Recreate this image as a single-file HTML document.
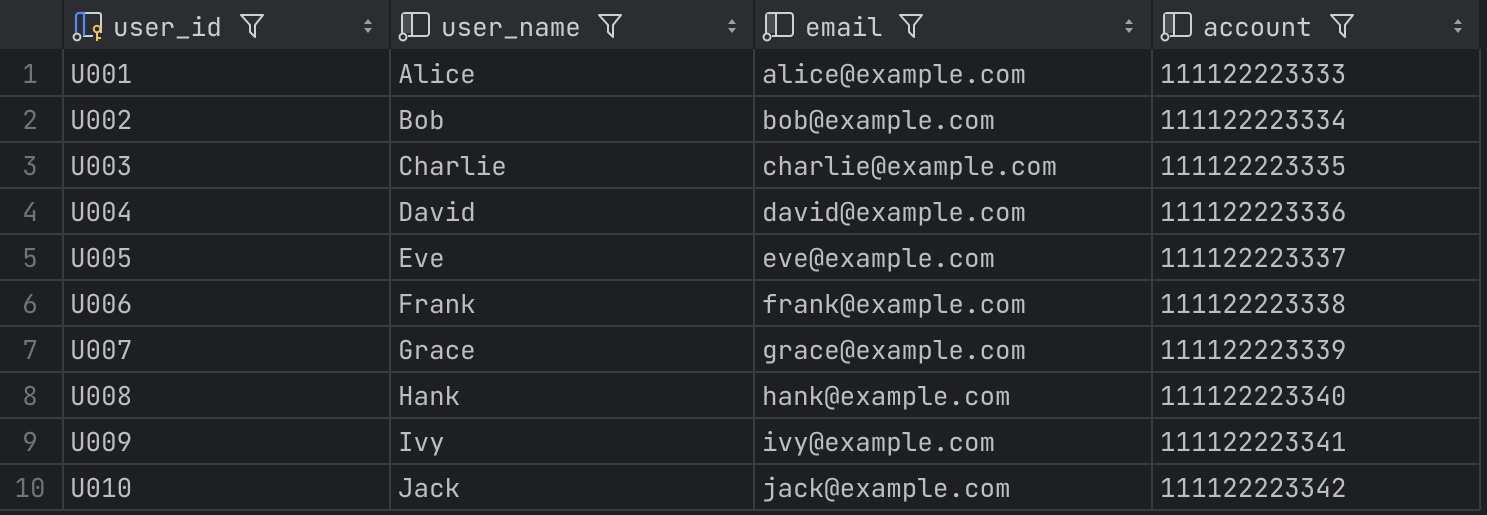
<!DOCTYPE html>
<html><head><style>
body{margin:0;width:1487px;height:515px;background:#1e1f22;overflow:hidden;position:relative;font-family:"JetBrains Mono","Liberation Mono","DejaVu Sans Mono",monospace;font-size:25.9px;color:#bcbec4}
.hdr{position:absolute;top:0;left:0;width:1480px;height:49px;background:#2b2d30}
.vl{position:absolute;top:0;width:2px;height:515px;background:#393b40}
.hl{position:absolute;left:0;width:1480px;height:2px;background:#393b40}
.t{position:absolute;line-height:30px;white-space:pre}
.n{color:#6f737a;text-align:center;width:60px;left:0 !important}
.h{color:#c9ccd2}
svg{position:absolute}
</style></head><body>
<div class="hdr"></div>
<div class="vl" style="left:62px;background:#1e1f22;height:49px"></div>
<div class="vl" style="left:389px;background:#1e1f22;height:49px"></div>
<div class="vl" style="left:753px;background:#1e1f22;height:49px"></div>
<div class="vl" style="left:1151px;background:#1e1f22;height:49px"></div>
<div class="vl" style="left:1479px;background:#1e1f22;height:49px"></div>
<div class="vl" style="left:62px;top:49px;height:461px"></div>
<div class="vl" style="left:389px;top:49px;height:461px"></div>
<div class="vl" style="left:753px;top:49px;height:461px"></div>
<div class="vl" style="left:1151px;top:49px;height:461px"></div>
<div class="vl" style="left:1479px;top:49px;height:461px"></div>
<div class="hl" style="top:95px"></div><div class="hl" style="top:141px"></div><div class="hl" style="top:187px"></div><div class="hl" style="top:233px"></div><div class="hl" style="top:279px"></div><div class="hl" style="top:325px"></div><div class="hl" style="top:371px"></div><div class="hl" style="top:417px"></div><div class="hl" style="top:463px"></div><div class="hl" style="top:509px"></div>

<svg style="left:70px;top:9px" width="40" height="36"><g transform="translate(-70,-9)"><path d="M84 13h15a2 2 0 0 1 2 2v18" fill="none" stroke="#ced0d6" stroke-width="2"/><path d="M83 36h10" stroke="#ced0d6" stroke-width="2"/><path d="M76 33V16a3 3 0 0 1 3-3h5v23" fill="none" stroke="#548af7" stroke-width="2.2"/><circle cx="77" cy="37" r="3.4" fill="none" stroke="#ced0d6" stroke-width="2"/><circle cx="97" cy="29" r="3.3" fill="none" stroke="#f2c55c" stroke-width="2"/><path d="M97 32v9M97 38h4" stroke="#f2c55c" stroke-width="2"/></g></svg>
<div class="t h" style="left:113px;top:12px">user_id</div>
<div class="t h" style="left:441px;top:12px">user_name</div>
<div class="t h" style="left:805px;top:12px">email</div>
<div class="t h" style="left:1203px;top:12px">account</div>

<svg width="0" height="0"><defs><g id="ic"><path d="M4 24V7a3 3 0 0 1 3-3h21a3 3 0 0 1 3 3v17a3 3 0 0 1-3 3H10" fill="none" stroke="#ced0d6" stroke-width="2"/><path d="M14 4v23" stroke="#ced0d6" stroke-width="2"/><rect x="5" y="5" width="8" height="19" fill="#4a4c52"/><circle cx="5" cy="28" r="3.5" fill="#2b2d30" stroke="#ced0d6" stroke-width="2"/></g>
<g id="f"><path d="M2 3h22l-8 10v12l-5-5v-7z" fill="none" stroke="#ced0d6" stroke-width="2" stroke-linejoin="round"/></g>
<g id="s"><path d="M1 6l4-5 4 5zM1 10l4 5 4-5z" fill="#9da0a8"/></g></defs></svg>
<svg style="left:398px;top:9px" width="36" height="36"><use href="#ic"/></svg>
<svg style="left:762px;top:9px" width="36" height="36"><use href="#ic"/></svg>
<svg style="left:1160px;top:9px" width="36" height="36"><use href="#ic"/></svg>
<svg style="left:239px;top:12px" width="28" height="28"><use href="#f"/></svg>
<svg style="left:597px;top:12px" width="28" height="28"><use href="#f"/></svg>
<svg style="left:898px;top:12px" width="28" height="28"><use href="#f"/></svg>
<svg style="left:1329px;top:12px" width="28" height="28"><use href="#f"/></svg>
<svg style="left:363px;top:18px" width="10" height="16"><use href="#s"/></svg>
<svg style="left:727px;top:18px" width="10" height="16"><use href="#s"/></svg>
<svg style="left:1124px;top:18px" width="10" height="16"><use href="#s"/></svg>
<svg style="left:1453px;top:18px" width="10" height="16"><use href="#s"/></svg>

<div class="t n" style="top:59px">1</div><div class="t" style="left:70px;top:59px">U001</div><div class="t" style="left:398px;top:59px">Alice</div><div class="t" style="left:762px;top:59px">alice@example.com</div><div class="t" style="left:1160px;top:59px">111122223333</div>
<div class="t n" style="top:105px">2</div><div class="t" style="left:70px;top:105px">U002</div><div class="t" style="left:398px;top:105px">Bob</div><div class="t" style="left:762px;top:105px">bob@example.com</div><div class="t" style="left:1160px;top:105px">111122223334</div>
<div class="t n" style="top:151px">3</div><div class="t" style="left:70px;top:151px">U003</div><div class="t" style="left:398px;top:151px">Charlie</div><div class="t" style="left:762px;top:151px">charlie@example.com</div><div class="t" style="left:1160px;top:151px">111122223335</div>
<div class="t n" style="top:197px">4</div><div class="t" style="left:70px;top:197px">U004</div><div class="t" style="left:398px;top:197px">David</div><div class="t" style="left:762px;top:197px">david@example.com</div><div class="t" style="left:1160px;top:197px">111122223336</div>
<div class="t n" style="top:243px">5</div><div class="t" style="left:70px;top:243px">U005</div><div class="t" style="left:398px;top:243px">Eve</div><div class="t" style="left:762px;top:243px">eve@example.com</div><div class="t" style="left:1160px;top:243px">111122223337</div>
<div class="t n" style="top:289px">6</div><div class="t" style="left:70px;top:289px">U006</div><div class="t" style="left:398px;top:289px">Frank</div><div class="t" style="left:762px;top:289px">frank@example.com</div><div class="t" style="left:1160px;top:289px">111122223338</div>
<div class="t n" style="top:335px">7</div><div class="t" style="left:70px;top:335px">U007</div><div class="t" style="left:398px;top:335px">Grace</div><div class="t" style="left:762px;top:335px">grace@example.com</div><div class="t" style="left:1160px;top:335px">111122223339</div>
<div class="t n" style="top:381px">8</div><div class="t" style="left:70px;top:381px">U008</div><div class="t" style="left:398px;top:381px">Hank</div><div class="t" style="left:762px;top:381px">hank@example.com</div><div class="t" style="left:1160px;top:381px">111122223340</div>
<div class="t n" style="top:427px">9</div><div class="t" style="left:70px;top:427px">U009</div><div class="t" style="left:398px;top:427px">Ivy</div><div class="t" style="left:762px;top:427px">ivy@example.com</div><div class="t" style="left:1160px;top:427px">111122223341</div>
<div class="t n" style="top:473px">10</div><div class="t" style="left:70px;top:473px">U010</div><div class="t" style="left:398px;top:473px">Jack</div><div class="t" style="left:762px;top:473px">jack@example.com</div><div class="t" style="left:1160px;top:473px">111122223342</div>
</body></html>
